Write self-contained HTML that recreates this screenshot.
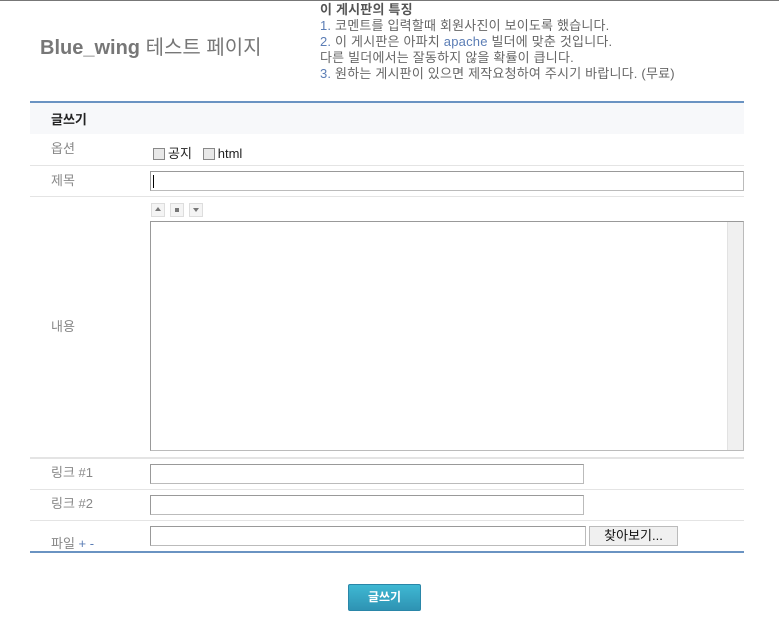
<!DOCTYPE html>
<html><head><meta charset="utf-8"><style>
*{margin:0;padding:0;box-sizing:border-box}
body{width:779px;height:618px;background:#fff;font-family:"Liberation Sans","Noto Sans CJK KR",sans-serif;position:relative;overflow:hidden;border-top:1px solid #777}
.a{position:absolute}
.t{left:40px;top:30px;font-size:20px;color:#777;white-space:nowrap}
.t b{color:#777}
.info{left:320px;top:1px;font-size:13px;line-height:16px;color:#666;white-space:nowrap;letter-spacing:0.2px}
.info .n{color:#5b7db5}
.lbl{left:51px;font-size:13px;color:#888}
.hl{left:30px;width:714px;height:1px;background:#e4e4e4}
.inp{border:1px solid #bbb;border-top-color:#999;border-left-color:#999;background:#fff}
.cb{display:inline-block;width:12px;height:12px;border:1px solid #888;background:#e8e8e8;vertical-align:-2px;margin-right:3px}
.sb{width:14px;height:14px;border:1px solid #ddd;background:#f4f4f4;top:202px}
</style></head><body>
<div class="a t"><b>Blue_wing</b> 테스트 페이지</div>
<div class="a info"><b style="color:#555">이 게시판의 특징</b><br><span class="n">1.</span> 코멘트를 입력할때 회원사진이 보이도록 했습니다.<br><span class="n">2.</span> 이 게시판은 아파치 <span class="n">apache</span> 빌더에 맞춘 것입니다.<br>다른 빌더에서는 잘동하지 않을 확률이 큽니다.<br><span class="n">3.</span> 원하는 게시판이 있으면 제작요청하여 주시기 바랍니다. (무료)</div>
<div class="a" style="left:30px;top:100px;width:714px;height:2px;background:#6a93c2"></div>
<div class="a" style="left:30px;top:102px;width:714px;height:31px;background:#f7f8fa"></div>
<div class="a" style="left:51px;top:108px;font-size:13px;font-weight:bold;color:#222">글쓰기</div>
<div class="a lbl" style="top:137px">옵션</div>
<div class="a" style="left:153px;top:142px;font-size:13px;color:#222"><span class="cb"></span>공지 &nbsp; <span class="cb"></span>html</div>
<div class="a hl" style="top:164px"></div>
<div class="a lbl" style="top:169px">제목</div>
<div class="a inp" style="left:150px;top:170px;width:594px;height:20px"><div style="position:absolute;left:2px;top:3px;width:1px;height:13px;background:#000"></div></div>
<div class="a hl" style="top:195px"></div>
<div class="a sb" style="left:151px"><div style="margin:3px auto;width:0;border:3px solid transparent;border-bottom:4px solid #777;border-top:0"></div></div>
<div class="a sb" style="left:170px"><div style="margin:4px auto;width:4px;height:4px;background:#777"></div></div>
<div class="a sb" style="left:189px"><div style="margin:4px auto;width:0;border:3px solid transparent;border-top:4px solid #777;border-bottom:0"></div></div>
<div class="a lbl" style="top:315px">내용</div>
<div class="a inp" style="left:150px;top:220px;width:594px;height:230px"><div style="position:absolute;right:0;top:0;width:16px;height:228px;background:#f0f0f0;border-left:1px solid #e2e2e2"></div></div>
<div class="a" style="left:30px;top:456px;width:714px;height:2px;background:#e4e4e4"></div>
<div class="a lbl" style="top:461px">링크 #1</div>
<div class="a inp" style="left:150px;top:463px;width:434px;height:20px"></div>
<div class="a hl" style="top:488px"></div>
<div class="a lbl" style="top:492px">링크 #2</div>
<div class="a inp" style="left:150px;top:494px;width:434px;height:20px"></div>
<div class="a hl" style="top:519px"></div>
<div class="a lbl" style="top:532px">파일 <span style="color:#5b7db5">+ -</span></div>
<div class="a inp" style="left:150px;top:525px;width:436px;height:20px"></div>
<div class="a" style="left:589px;top:525px;width:89px;height:20px;background:#f0f0f0;border:1px solid #bbb;font-size:13px;color:#111;text-align:center;line-height:18px">찾아보기...</div>
<div class="a" style="left:30px;top:550px;width:714px;height:2px;background:#6a93c2"></div>
<div class="a" style="left:348px;top:583px;width:73px;height:27px;background:linear-gradient(#3fb8d3,#2e93b3);border:1px solid #2a86a8;border-radius:2px;color:#fff;font-size:12px;font-weight:bold;text-align:center;line-height:24px">글쓰기</div>
</body></html>
